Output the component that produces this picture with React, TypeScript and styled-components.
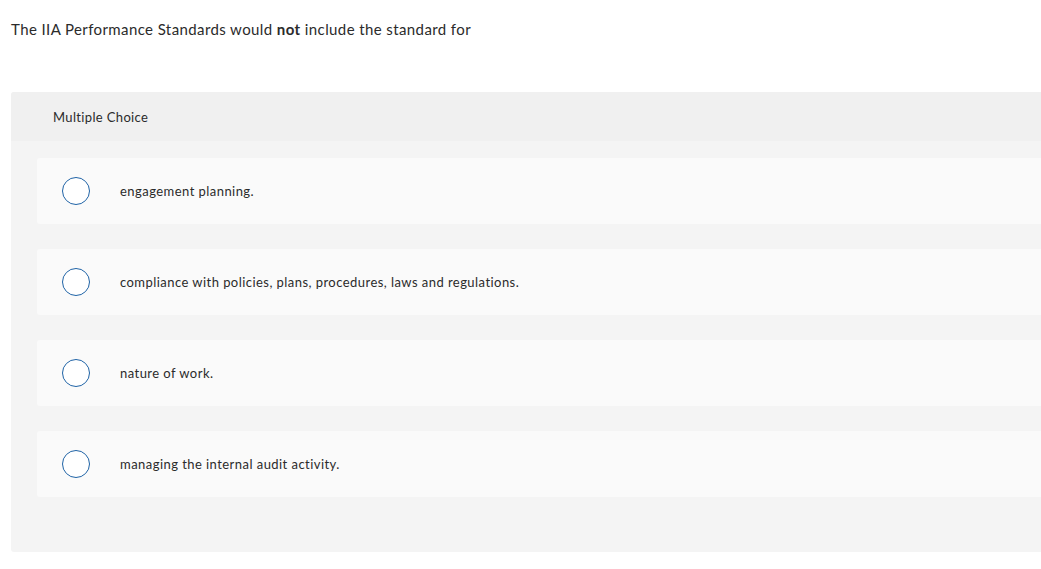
import React from 'react'
import styled, { createGlobalStyle } from 'styled-components'

const GlobalStyle = createGlobalStyle`
html, body {
  margin:0;
  padding:0;
  background:#ffffff;
  overflow:hidden;
}
body {
  font-family: Lato, "Open Sans", "Liberation Sans", sans-serif;
  color:#2b2b2b;
}
`

const options = [
  'engagement planning.',
  'compliance with policies, plans, procedures, laws and regulations.',
  'nature of work.',
  'managing the internal audit activity.',
]

const App = () => {
  return (
    <Page>
      <GlobalStyle />
      <Question>
        The IIA Performance Standards would <b>not</b> include the standard for
      </Question>
      <Panel>
        <PanelHeader>Multiple Choice</PanelHeader>
        <OptionList>
          {options.map((text) => (
            <Option key={text}>
              <Radio />
              <OptionText>{text}</OptionText>
            </Option>
          ))}
        </OptionList>
      </Panel>
    </Page>
  )
}

const Page = styled.div`
width:1041px;
height:569px;
padding:19px 0 0 11px;
box-sizing:border-box;
`

const Question = styled.p`
margin:0;
font-size:15px;
line-height:20px;
letter-spacing:0.4px;
color:#2b2b2b;

b{
  font-weight:700;
}
`

const Panel = styled.section`
margin-top:53px;
width:1050px;
height:460px;
background:#f4f4f4;
border-radius:3px;
overflow:hidden;
`

const PanelHeader = styled.div`
height:49px;
background:#f0f0f0;
display:flex;
align-items:center;
padding-left:42px;
font-size:13px;
letter-spacing:0.35px;
color:#2b2b2b;
`

const OptionList = styled.div`
display:flex;
flex-direction:column;
gap:25px;
padding:17px 0 0 26px;
`

const Option = styled.label`
display:flex;
align-items:center;
height:66px;
background:#fafafa;
border-radius:3px;
padding-left:25px;
`

const Radio = styled.span`
box-sizing:border-box;
width:28px;
height:28px;
border:1.5px solid #1f63a6;
border-radius:50%;
background:#ffffff;
flex-shrink:0;
`

const OptionText = styled.span`
margin-left:30px;
font-size:13px;
letter-spacing:0.45px;
color:#2b2b2b;
`

export default App
